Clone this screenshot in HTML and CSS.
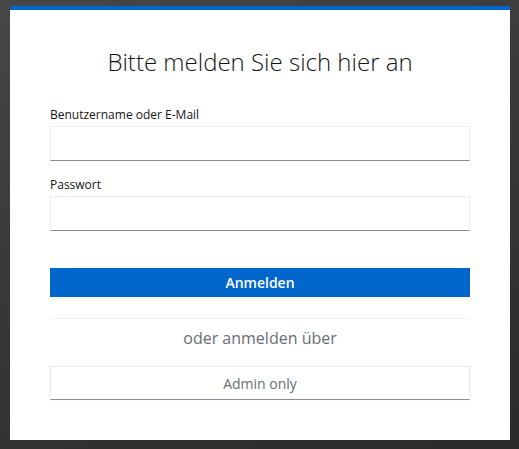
FILE: index.html
```html
<!DOCTYPE html>
<html lang="de">
<head>
<meta charset="utf-8">
<title>Anmelden</title>
<link rel="stylesheet" href="styles.css">
</head>
<body>
<main class="card">
  <h1 class="title">Bitte melden Sie sich hier an</h1>
  <form class="form">
    <div class="field">
      <label class="label" for="username">Benutzername oder E-Mail</label>
      <input class="input" id="username" type="text">
    </div>
    <div class="field">
      <label class="label" for="password">Passwort</label>
      <input class="input" id="password" type="password">
    </div>
    <button class="primary" type="button">Anmelden</button>
  </form>
  <div class="divider"></div>
  <p class="alt">oder anmelden über</p>
  <button class="secondary" type="button">Admin only</button>
</main>
</body>
</html>
```
FILE: styles.css
```css
html, body {
  height: 100%;
}
body {
  margin: 0;
  padding: 6px 9px 10px 10px;
  box-sizing: border-box;
  background: linear-gradient(160deg, #474747 0%, #3a3a3a 40%, #2a2a2a 100%);
  font-family: "Open Sans", "Liberation Sans", sans-serif;
}
.card {
  background: #fff;
  border-top: 4px solid #0066cc;
  padding: 0 40px 40px;
  display: flex;
  flex-direction: column;
}
.title {
  margin: 35px 0 0;
  font-size: 24px;
  font-weight: 300;
  color: #151515;
  text-align: center;
  line-height: 34px;
}
.form {
  display: flex;
  flex-direction: column;
  margin-top: 27px;
}
.field {
  display: flex;
  flex-direction: column;
  margin-bottom: 15px;
}
.label {
  font-size: 12px;
  color: #151515;
  line-height: 18px;
  margin-bottom: 2px;
}
.input {
  height: 35px;
  box-sizing: border-box;
  border: 1px solid #ededed;
  border-bottom-color: #8a8d90;
  margin: 0;
  padding: 0 8px;
  font: inherit;
}
.primary {
  margin-top: 22px;
  height: 29px;
  border: 0;
  background: #0066cc;
  color: #fff;
  font-family: "Open Sans", sans-serif;
  font-size: 14px;
  font-weight: 600;
  padding: 0;
}
.divider {
  height: 1px;
  background: #f0f0f0;
  margin-top: 21px;
}
.alt {
  margin: 8px 0 0;
  text-align: center;
  color: #6a6e73;
  font-size: 16px;
  line-height: 22px;
}
.secondary {
  margin-top: 17px;
  height: 34px;
  background: #fff;
  border: 1px solid #ededed;
  border-bottom-color: #8a8d90;
  box-shadow: 0 0 1px rgba(0, 0, 0, 0.08);
  color: #6a6e73;
  font-family: "Open Sans", sans-serif;
  font-size: 14px;
  padding: 0;
}
```
